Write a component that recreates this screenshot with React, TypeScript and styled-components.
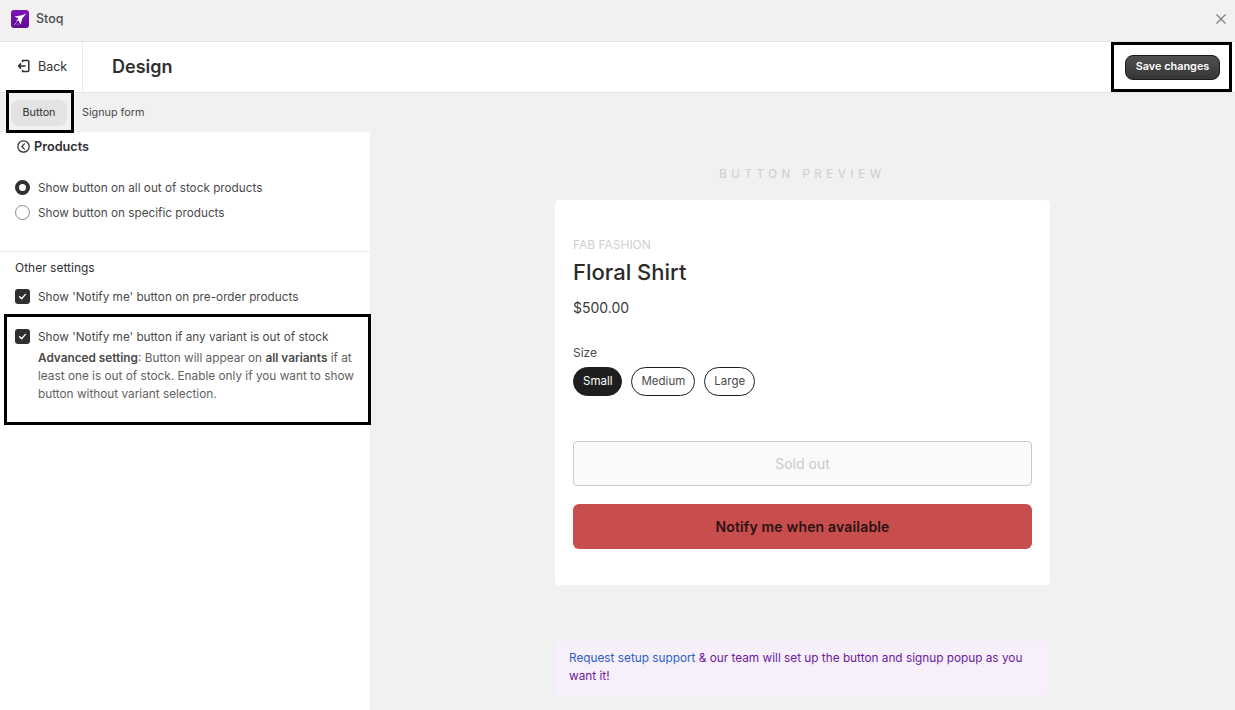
import React from "react";
import styled, { createGlobalStyle } from "styled-components";

const GlobalStyle = createGlobalStyle`
  html, body {
    margin: 0;
    padding: 0;
    height: 100%;
    overflow: hidden;
    background: #f1f1f1;
    font-family: Inter, "Liberation Sans", sans-serif;
    color: #303030;
  }
  * { box-sizing: border-box; }
`;

const Page = styled.div`
  width: 1235px;
  height: 710px;
  display: flex;
  flex-direction: column;
  background: #f1f1f1;
  overflow: hidden;
`;

const TitleBar = styled.div`
  height: 42px;
  flex: none;
  display: flex;
  align-items: center;
  justify-content: space-between;
  padding: 0 8px 4px 11px;
  border-bottom: 1px solid #e3e3e3;
`;

const AppName = styled.div`
  display: flex;
  align-items: center;
  gap: 7px;
  font-size: 12.5px;
  font-weight: 500;
  color: #4a4a4a;
`;

const Header = styled.div`
  height: 51px;
  flex: none;
  display: flex;
  align-items: stretch;
  justify-content: space-between;
  background: #fff;
  border-bottom: 1px solid #e3e3e3;
`;

const HeaderLeft = styled.div`
  display: flex;
  align-items: center;
`;

const BackLink = styled.div`
  width: 83px;
  height: 100%;
  display: flex;
  align-items: center;
  gap: 7px;
  padding: 0 0 2px 17px;
  font-size: 12.5px;
  color: #303030;
  border-right: 1px solid #ebebeb;
`;

const PageTitle = styled.h1`
  margin: 0 0 2px 29px;
  font-size: 18px;
  font-weight: 600;
  color: #303030;
`;

const SaveArea = styled.div`
  position: relative;
  display: flex;
  align-items: center;
  padding-right: 15px;
`;

const SaveButton = styled.button`
  height: 25px;
  width: 95px;
  padding: 0 0 2px;
  border: 1px solid #1a1a1a;
  border-radius: 8px;
  background: linear-gradient(#505050, #353535);
  color: #fff;
  font-family: inherit;
  font-size: 10.9px;
  font-weight: 600;
`;

const Highlight = styled.span<{ $top: number; $right: number; $bottom: number; $left: number }>`
  position: absolute;
  top: ${(p) => p.$top}px;
  right: ${(p) => p.$right}px;
  bottom: ${(p) => p.$bottom}px;
  left: ${(p) => p.$left}px;
  border: 3px solid #000;
  pointer-events: none;
`;

const Tabs = styled.div`
  height: 39px;
  flex: none;
  display: flex;
  align-items: flex-start;
  gap: 4px;
  padding: 7px 0 0 11px;
`;

const Tab = styled.div<{ $active?: boolean }>`
  position: relative;
  height: 26px;
  min-width: 56px;
  padding: 0 11px 2px;
  display: flex;
  align-items: center;
  justify-content: center;
  border-radius: 8px;
  font-size: 10.8px;
  font-weight: 400;
  color: ${(p) => (p.$active ? "#303030" : "#4a4a4a")};
  background: ${(p) => (p.$active ? "#e3e3e3" : "transparent")};
`;

const Body = styled.div`
  flex: 1;
  min-height: 0;
  display: flex;
`;

const Sidebar = styled.aside`
  width: 370px;
  flex: none;
  background: #fff;
`;

const ProductsSection = styled.section`
  height: 120px;
  padding: 7px 15px 0;
  border-bottom: 1px solid #ebebeb;
`;

const SectionHeading = styled.div`
  display: flex;
  align-items: center;
  gap: 4px;
  height: 15px;
  padding-left: 2px;
  font-size: 12.7px;
  font-weight: 600;
  color: #303030;
`;

const RadioList = styled.div`
  display: flex;
  flex-direction: column;
  gap: 10px;
  margin-top: 26px;
`;

const OptionRow = styled.div`
  display: flex;
  align-items: center;
  gap: 8px;
  height: 15px;
  font-size: 11.75px;
  color: #4a4a4a;
`;

const Radio = styled.span<{ $checked?: boolean }>`
  width: 15px;
  height: 15px;
  flex: none;
  border-radius: 50%;
  background: #fff;
  border: ${(p) => (p.$checked ? "4px solid #303030" : "1px solid #8a8a8a")};
`;

const Checkbox = styled.span`
  width: 15px;
  height: 15px;
  flex: none;
  display: flex;
  align-items: center;
  justify-content: center;
  border-radius: 3px;
  background: #303030;
`;

const OtherSection = styled.section`
  padding: 8px 15px 0;
`;

const OtherHeading = styled.div`
  font-size: 12px;
  line-height: 15px;
  color: #303030;
  margin-bottom: 14px;
`;

const VariantBlock = styled.div`
  position: relative;
  margin-top: 25px;
`;

const HelpText = styled.p`
  margin: 5px 0 0 23px;
  font-size: 11.8px;
  line-height: 18px;
  color: #616161;
  b {
    font-weight: 600;
    color: #4a4a4a;
  }
`;

const Preview = styled.main`
  flex: 1;
  display: flex;
  flex-direction: column;
  align-items: center;
  padding-top: 35px;
`;

const PreviewLabel = styled.div`
  height: 14px;
  font-size: 11.5px;
  line-height: 14px;
  font-weight: 500;
  letter-spacing: 4.55px;
  color: #cfd1d4;
`;

const Card = styled.div`
  width: 495px;
  height: 385px;
  margin-top: 19px;
  padding: 38px 18px 0;
  background: #fff;
  border-radius: 4px;
`;

const Vendor = styled.div`
  font-size: 12px;
  line-height: 14px;
  color: #d0d0d0;
`;

const ProductName = styled.div`
  margin-top: 6px;
  font-size: 22px;
  line-height: 28px;
  font-weight: 500;
  color: #2b2b2b;
`;

const Price = styled.div`
  margin-top: 13px;
  font-size: 14px;
  line-height: 18px;
  color: #3a3a3a;
`;

const SizeLabel = styled.div`
  margin-top: 28px;
  font-size: 12px;
  line-height: 15px;
  color: #4a4a4a;
`;

const Sizes = styled.div`
  display: flex;
  gap: 9px;
  margin-top: 7px;
`;

const SizePill = styled.div<{ $selected?: boolean }>`
  height: 29px;
  padding: 0 9px 1px;
  display: flex;
  align-items: center;
  border-radius: 15px;
  border: 1px solid #1e1e1e;
  font-size: 11.5px;
  color: ${(p) => (p.$selected ? "#fff" : "#4a4a4a")};
  background: ${(p) => (p.$selected ? "#1e1e1e" : "#fff")};
`;

const SoldOutButton = styled.div`
  height: 45px;
  margin-top: 45px;
  display: flex;
  align-items: center;
  justify-content: center;
  border: 1px solid #c9c9c9;
  border-radius: 4px;
  background: #fafafa;
  font-size: 14px;
  color: #c9c9c9;
`;

const NotifyButton = styled.div`
  height: 45px;
  margin-top: 18px;
  display: flex;
  align-items: center;
  justify-content: center;
  border-radius: 6px;
  background: #c84e4e;
  font-size: 14px;
  font-weight: 600;
  letter-spacing: 0.17px;
  color: #2a1212;
`;

const SupportNote = styled.div`
  width: 493px;
  height: 55px;
  margin: 56px 2px 0 0;
  padding: 8px 14px;
  background: #f7f0fb;
  border-radius: 3px;
  font-size: 11.8px;
  line-height: 18px;
  color: #6a1b9a;
`;

const SupportLink = styled.span`
  color: #2b5fc4;
`;

const CloseButton = styled.div`
  display: flex;
  color: #7a7a7a;
`;

const LogoIcon = () => (
  <svg width="18" height="18" viewBox="0 0 18 18">
    <defs>
      <linearGradient id="logoFill" x1="0" y1="0" x2="0" y2="1">
        <stop offset="0" stopColor="#7d14b8" />
        <stop offset="1" stopColor="#5f0c94" />
      </linearGradient>
    </defs>
    <rect width="18" height="18" rx="3" fill="url(#logoFill)" />
    <path d="M15.2 3.6 L11 5.2 L3.5 6.6 L7.5 8.6 L5 11.5 L7.8 10.6 L9.5 14.8 L11.2 8.5 Z" fill="#fff" />
    <path d="M3 15 L5.8 12.2 M6.4 15.4 L7.6 13.6" stroke="#d9b8ee" strokeWidth="0.7" />
  </svg>
);

const BackIcon = () => (
  <svg width="14" height="14" viewBox="0 0 14 14" fill="none" stroke="#303030" strokeWidth="1.5" strokeLinecap="round" strokeLinejoin="round">
    <path d="M5.5 2.6 V1.4 H10.8 a1 1 0 0 1 1 1 V11.6 a1 1 0 0 1 -1 1 H5.5 V11.4" />
    <path d="M8 7 H1.5 M3.6 4.9 L1.5 7 L3.6 9.1" />
  </svg>
);

const CircleChevronIcon = () => (
  <svg width="13" height="13" viewBox="0 0 13 13" fill="none" stroke="#303030" strokeWidth="1.2" strokeLinecap="round" strokeLinejoin="round">
    <circle cx="6.5" cy="6.5" r="5.7" />
    <path d="M7.4 3.9 L4.8 6.5 L7.4 9.1" />
  </svg>
);

const CheckIcon = () => (
  <svg width="9" height="9" viewBox="0 0 9 9" fill="none" stroke="#fff" strokeWidth="1.4" strokeLinecap="round" strokeLinejoin="round">
    <path d="M1.6 4.8 L3.6 6.7 L7.4 2.4" />
  </svg>
);

const CloseIcon = () => (
  <svg width="12" height="12" viewBox="0 0 12 12" fill="none" stroke="currentColor" strokeWidth="1.2">
    <path d="M1.5 1.5 L10.5 10.5 M10.5 1.5 L1.5 10.5" />
  </svg>
);

const App: React.FC = () => {
  return (
    <Page>
      <GlobalStyle />
      <TitleBar>
        <AppName>
          <LogoIcon />
          Stoq
        </AppName>
        <CloseButton>
          <CloseIcon />
        </CloseButton>
      </TitleBar>
      <Header>
        <HeaderLeft>
          <BackLink>
            <BackIcon />
            Back
          </BackLink>
          <PageTitle>Design</PageTitle>
        </HeaderLeft>
        <SaveArea>
          <SaveButton>Save changes</SaveButton>
          <Highlight $top={0} $right={3} $bottom={0} $left={-14} />
        </SaveArea>
      </Header>
      <Tabs>
        <Tab $active>
          Button
          <Highlight $top={-10} $right={-7} $bottom={-7} $left={-5} />
        </Tab>
        <Tab>Signup form</Tab>
      </Tabs>
      <Body>
        <Sidebar>
          <ProductsSection>
            <SectionHeading>
              <CircleChevronIcon />
              Products
            </SectionHeading>
            <RadioList>
              <OptionRow>
                <Radio $checked />
                Show button on all out of stock products
              </OptionRow>
              <OptionRow>
                <Radio />
                Show button on specific products
              </OptionRow>
            </RadioList>
          </ProductsSection>
          <OtherSection>
            <OtherHeading>Other settings</OtherHeading>
            <OptionRow>
              <Checkbox>
                <CheckIcon />
              </Checkbox>
              Show 'Notify me' button on pre-order products
            </OptionRow>
            <VariantBlock>
              <OptionRow>
                <Checkbox>
                  <CheckIcon />
                </Checkbox>
                Show 'Notify me' button if any variant is out of stock
              </OptionRow>
              <HelpText>
                <b>Advanced setting</b>: Button will appear on <b>all variants</b> if at least one is out of stock. Enable only if you want to show button without variant selection.
              </HelpText>
              <Highlight $top={-15} $right={-16} $bottom={-22} $left={-11} />
            </VariantBlock>
          </OtherSection>
        </Sidebar>
        <Preview>
          <PreviewLabel>BUTTON PREVIEW</PreviewLabel>
          <Card>
            <Vendor>FAB FASHION</Vendor>
            <ProductName>Floral Shirt</ProductName>
            <Price>$500.00</Price>
            <SizeLabel>Size</SizeLabel>
            <Sizes>
              <SizePill $selected>Small</SizePill>
              <SizePill>Medium</SizePill>
              <SizePill>Large</SizePill>
            </Sizes>
            <SoldOutButton>Sold out</SoldOutButton>
            <NotifyButton>Notify me when available</NotifyButton>
          </Card>
          <SupportNote>
            <SupportLink>Request setup support</SupportLink> &amp; our team will set up the button and signup popup as you want it!
          </SupportNote>
        </Preview>
      </Body>
    </Page>
  );
};

export default App;
